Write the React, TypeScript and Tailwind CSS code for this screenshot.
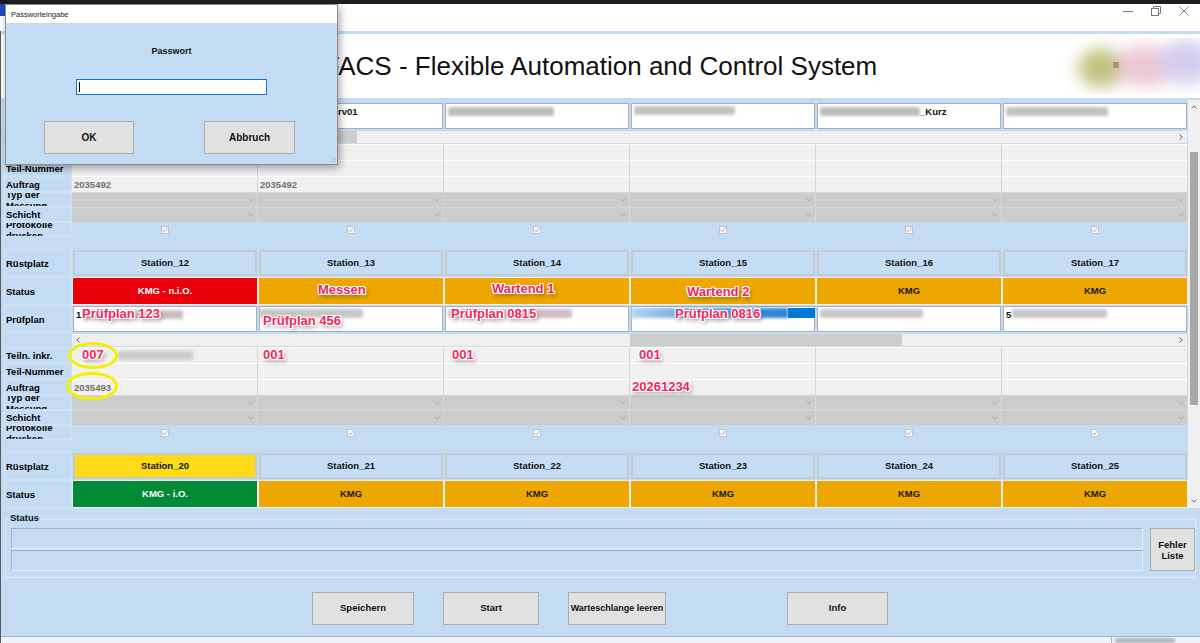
import React from "react";

const ANN =
  "absolute z-20 whitespace-nowrap text-[13px] font-bold leading-[15px] text-[#f3265e] [text-shadow:-1px_-1px_0_#fff,1px_-1px_0_#fff,-1px_1px_0_#fff,1px_1px_0_#fff,0_1px_0_#fff,1px_0_0_#fff,2px_3px_4px_rgba(0,0,0,0.45)]";

function Ann({ t, cls }: { t: string; cls: string }) {
  return <span className={`${ANN} ${cls}`}>{t}</span>;
}

function Bl({ cls }: { cls: string }) {
  return <span className={`block h-[9px] shrink-0 rounded-[2px] blur-[1.5px] ${cls}`} />;
}

function Ring({ cls }: { cls: string }) {
  return (
    <span
      className={`pointer-events-none absolute z-10 rounded-[50%] border-[3px] border-[#f4ef00] ${cls}`}
    />
  );
}

function Chevron() {
  return (
    <svg width="6" height="4" viewBox="0 0 6 4">
      <path d="M0.5 0.5 L3 3.2 L5.5 0.5" fill="none" stroke="#a3a3a3" strokeWidth="0.8" />
    </svg>
  );
}

function Check() {
  return (
    <svg width="8" height="8" viewBox="0 0 8 8">
      <rect x="0.5" y="0.5" width="7" height="7" fill="#f6f6f6" stroke="#c4c4c4" />
      <path d="M1.8 4.2 L3.3 5.8 L6.4 1.8" fill="none" stroke="#a6a6a6" strokeWidth="0.9" />
    </svg>
  );
}

function LabelCell({ text }: { text?: string }) {
  if (text === undefined) return <div className="w-[68px] shrink-0" />;
  return (
    <div className="flex w-[68px] shrink-0 items-center overflow-hidden border border-[#d2e1ef] bg-[#c3dcf3] px-[1px] text-[9.5px] font-bold leading-[11px] text-black">
      <span>{text}</span>
    </div>
  );
}

type BlockData = {
  stations: string[];
  stationBg: string[];
  status: React.ReactNode[];
  statusBg: string[];
  pruef: React.ReactNode[];
  thumb: string;
  teiln: React.ReactNode[];
  auftrag: React.ReactNode[];
};

const COLS = [0, 1, 2, 3, 4, 5];

function DataRow({ label, cells }: { label: string; cells: React.ReactNode[] }) {
  return (
    <div className="flex h-[16px]">
      <LabelCell text={label} />
      {COLS.map((i) => (
        <div
          key={i}
          className="relative flex w-[186px] shrink-0 items-center border-t border-r border-t-white border-r-[#d3d3d3] bg-[#f0f0f0] px-[2px] text-[9.5px] font-bold leading-[11px] text-[#707070]"
        >
          {cells[i]}
        </div>
      ))}
    </div>
  );
}

function DropRow({ label }: { label: string }) {
  return (
    <div className="flex h-[15px]">
      <LabelCell text={label} />
      {COLS.map((i) => (
        <div
          key={i}
          className="flex w-[186px] shrink-0 items-center justify-end border-t border-r border-t-[#d8d8d8] border-r-[#d9d9d9] bg-[#cccccc] pr-[3px]"
        >
          <Chevron />
        </div>
      ))}
    </div>
  );
}

function HeadRows({ d }: { d: BlockData }) {
  return (
    <>
      <div className="flex h-[28px]">
        <LabelCell text="Rüstplatz" />
        {COLS.map((i) => (
          <div key={i} className="w-[186px] shrink-0 p-[1px]">
            <div
              className={`flex h-full items-center justify-center border-2 border-[#c6cbd0] text-[9.5px] font-bold text-[#111] ${d.stationBg[i]}`}
            >
              {d.stations[i]}
            </div>
          </div>
        ))}
      </div>
      <div className="flex h-[28px]">
        <LabelCell text="Status" />
        {COLS.map((i) => (
          <div
            key={i}
            className={`relative flex w-[186px] shrink-0 items-center justify-center border border-[#eeeeee] text-[9.5px] font-bold ${d.statusBg[i]}`}
          >
            {d.status[i]}
          </div>
        ))}
      </div>
    </>
  );
}

function BodyRows({ d }: { d: BlockData }) {
  return (
    <>
      <div className="flex h-[28px]">
        <LabelCell text="Prüfplan" />
        {COLS.map((i) => (
          <div key={i} className="w-[186px] shrink-0 p-[1px]">
            <div className="relative flex h-full items-start border border-[#a7b0b9] bg-white px-[2px] pt-[2px] text-[9.5px] font-bold leading-[11px] text-[#111]">
              {d.pruef[i]}
            </div>
          </div>
        ))}
      </div>
      <div className="flex h-[14px]">
        <div className="w-[68px] shrink-0" />
        <div className="mt-[1px] flex h-[12px] w-[1115px] items-center bg-[#efefef]">
          <span className="flex w-[12px] justify-center">
            <svg width="4" height="6" viewBox="0 0 4 6">
              <path d="M3.5 0.5 L0.8 3 L3.5 5.5" fill="none" stroke="#555" strokeWidth="0.9" />
            </svg>
          </span>
          <div className="flex h-full flex-1 items-center">
            <div className={`h-[12px] bg-[#cdcdcd] ${d.thumb}`} />
          </div>
          <span className="flex w-[12px] justify-center">
            <svg width="4" height="6" viewBox="0 0 4 6">
              <path d="M0.5 0.5 L3.2 3 L0.5 5.5" fill="none" stroke="#555" strokeWidth="0.9" />
            </svg>
          </span>
        </div>
      </div>
      <DataRow label="Teiln. inkr." cells={d.teiln} />
      <DataRow label="Teil-Nummer" cells={[]} />
      <DataRow label="Auftrag" cells={d.auftrag} />
      <DropRow label="Typ der Messung" />
      <DropRow label="Schicht" />
      <div className="flex h-[15px]">
        <LabelCell text="Protokolle drucken" />
        {COLS.map((i) => (
          <div key={i} className="flex w-[186px] shrink-0 justify-center pt-[4px]">
            <Check />
          </div>
        ))}
      </div>
      <div className="h-[12px]" />
    </>
  );
}

const BLUE_CELL = "bg-[#c4ddf4]";
const ORANGE = "bg-[#eea600] text-[#1a1a1a]";

const A: BlockData = {
  stations: [],
  stationBg: [],
  status: [],
  statusBg: [],
  pruef: [
    <Bl key="a" cls="mt-[2px] w-[100px] bg-[#b8b8b8]" />,
    <React.Fragment key="b">
      <Bl cls="mt-[2px] w-[74px] bg-[#b8b8b8]" />
      <span className="ml-[2px]">rv01</span>
    </React.Fragment>,
    <Bl key="c" cls="mt-[1px] w-[106px] bg-[#bdbdbd]" />,
    <Bl key="d" cls="mt-[0px] w-[101px] bg-[#c2c2c2]" />,
    <React.Fragment key="e">
      <Bl cls="mt-[1px] w-[100px] bg-[#bdbdbd]" />
      <span>_Kurz</span>
    </React.Fragment>,
    <Bl key="f" cls="mt-[1px] w-[102px] bg-[#c2c2c2]" />,
  ],
  thumb: "ml-[180px] w-[93px]",
  teiln: [],
  auftrag: ["2035492", "2035492"],
};

const B: BlockData = {
  stations: ["Station_12", "Station_13", "Station_14", "Station_15", "Station_16", "Station_17"],
  stationBg: [BLUE_CELL, BLUE_CELL, BLUE_CELL, BLUE_CELL, BLUE_CELL, BLUE_CELL],
  status: [
    <span key="a" className="text-white">KMG - n.i.O.</span>,
    <Ann key="b" t="Messen" cls="left-[59px] top-[4px]" />,
    <Ann key="c" t="Wartend 1" cls="left-[47px] top-[3px]" />,
    <Ann key="d" t="Wartend 2" cls="left-[56px] top-[6px]" />,
    "KMG",
    "KMG",
  ],
  statusBg: ["bg-[#e8000b]", ORANGE, ORANGE, ORANGE, ORANGE, ORANGE],
  pruef: [
    <React.Fragment key="a">
      <span>1</span>
      <Bl cls="ml-[2px] mt-[1px] w-[100px] bg-[#c9bfc3]" />
      <Ann t="Prüfplan 123" cls="left-[8px] top-[-1px]" />
    </React.Fragment>,
    <React.Fragment key="b">
      <Bl cls="-ml-[3px] mt-[0px] w-[104px] bg-[#c6c6c6]" />
      <Ann t="Prüfplan 456" cls="left-[3px] top-[6px]" />
    </React.Fragment>,
    <React.Fragment key="c">
      <Bl cls="mt-[0px] w-[124px] bg-[#d4bcc4]" />
      <Ann t="Prüfplan 0815" cls="left-[5px] top-[-1px]" />
    </React.Fragment>,
    <React.Fragment key="d">
      <span className="-ml-[3px] -mt-[1px] block h-[10px] w-[157px] shrink-0 bg-linear-to-r from-[#b6d3ef] via-[#4f98dd] to-[#2a84d8] blur-[1.5px]" />
      <span className="-mt-[1px] block h-[10px] w-[27px] shrink-0 bg-[#0078d7]" />
      <Ann t="Prüfplan 0816" cls="left-[43px] top-[-1px]" />
    </React.Fragment>,
    <Bl key="e" cls="mt-[0px] w-[103px] bg-[#c8c8c8]" />,
    <React.Fragment key="f">
      <span>5</span>
      <Bl cls="ml-[1px] mt-[0px] w-[95px] bg-[#c8c8c8]" />
    </React.Fragment>,
  ],
  thumb: "ml-[546px] w-[272px]",
  teiln: [
    <React.Fragment key="a">
      <Bl cls="ml-[44px] w-[75px] bg-[#cbcbcb]" />
      <Ann t="007" cls="left-[10px] top-[-1px]" />
      <Ring cls="left-[-4px] top-[-6px] h-[27px] w-[50px]" />
    </React.Fragment>,
    <Ann key="b" t="001" cls="left-[5px] top-[-1px]" />,
    <Ann key="c" t="001" cls="left-[8px] top-[-1px]" />,
    <Ann key="d" t="001" cls="left-[9px] top-[-1px]" />,
  ],
  auftrag: [
    <React.Fragment key="a">
      <span>2035493</span>
      <Ring cls="left-[-6px] top-[-8px] h-[28px] w-[52px]" />
    </React.Fragment>,
    null,
    null,
    <Ann key="d" t="20261234" cls="left-[2px] top-[-1px]" />,
  ],
};

const C: BlockData = {
  stations: ["Station_20", "Station_21", "Station_22", "Station_23", "Station_24", "Station_25"],
  stationBg: ["bg-[#ffdc17]", BLUE_CELL, BLUE_CELL, BLUE_CELL, BLUE_CELL, BLUE_CELL],
  status: [<span key="a" className="text-white">KMG - i.O.</span>, "KMG", "KMG", "KMG", "KMG", "KMG"],
  statusBg: ["bg-[#008a36]", ORANGE, ORANGE, ORANGE, ORANGE, ORANGE],
  pruef: [],
  thumb: "",
  teiln: [],
  auftrag: [],
};

function Btn({ cls, children }: { cls: string; children: React.ReactNode }) {
  return (
    <div
      className={`flex h-full shrink-0 items-center justify-center whitespace-nowrap border border-[#adadad] bg-[#e1e1e1] font-bold text-[#111] ${cls}`}
    >
      {children}
    </div>
  );
}

export default function App() {
  return (
    <div className="relative h-[643px] w-[1200px] overflow-hidden bg-[#c3dcf3] font-['Liberation_Sans',Arial,sans-serif] text-black">
      <div className="h-[4px] bg-[#1e1e1e]" />
      {/* window title bar */}
      <div className="flex h-[27px] items-start bg-white">
        <div className="h-[12px] w-[6px] bg-[#2448c0]" />
        <div className="flex-1" />
        <div className="flex pr-[2px]">
          <div className="flex h-[14px] w-[28px] items-center justify-center">
            <svg width="10" height="10" viewBox="0 0 10 10">
              <path d="M0 5.5 H10" stroke="#777" strokeWidth="1" />
            </svg>
          </div>
          <div className="flex h-[14px] w-[28px] items-center justify-center">
            <svg width="10" height="10" viewBox="0 0 10 10">
              <rect x="0.5" y="2.5" width="7" height="7" fill="none" stroke="#777" />
              <path d="M2.5 2.5 V0.5 H9.5 V7.5 H7.5" fill="none" stroke="#777" />
            </svg>
          </div>
          <div className="flex h-[14px] w-[28px] items-center justify-center">
            <svg width="10" height="10" viewBox="0 0 10 10">
              <path d="M0.5 0.5 L9.5 9.5 M9.5 0.5 L0.5 9.5" stroke="#777" strokeWidth="0.9" />
            </svg>
          </div>
        </div>
      </div>

      <div className="border-l border-[#5a5a5a]">
        {/* header */}
        <div className="pt-[3px]">
          <div className="grid h-[64px] grid-cols-[1fr_auto_1fr] items-center bg-white">
            <div />
            <div className="whitespace-nowrap text-[26px] leading-[30px] text-[#111]">
              FACS - Flexible Automation and Control System
            </div>
            <div className="justify-self-end">
              <svg width="140" height="56" viewBox="0 0 140 56">
                <defs>
                  <filter id="lg" filterUnits="userSpaceOnUse" x="-20" y="-20" width="180" height="96">
                    <feGaussianBlur stdDeviation="8" />
                  </filter>
                </defs>
                <g filter="url(#lg)">
                  <ellipse cx="42" cy="30" rx="24" ry="19" fill="#bfc27a" />
                  <ellipse cx="86" cy="28" rx="30" ry="21" fill="#ecc8d6" />
                  <ellipse cx="126" cy="24" rx="28" ry="22" fill="#d4cdee" />
                </g>
                <rect x="53" y="24" width="6" height="6" fill="#a99a68" />
              </svg>
            </div>
          </div>
        </div>

        {/* station grid viewport */}
        <div className="mt-[2px] flex h-[408px]">
          <div className="w-[3px] shrink-0" />
          <div className="w-[1184px] shrink-0 overflow-hidden pt-[2px]">
            <BodyRows d={A} />
            <HeadRows d={B} />
            <BodyRows d={B} />
            <HeadRows d={C} />
          </div>
          <div className="flex w-[12px] shrink-0 flex-col bg-[#f0f0f0]">
            <div className="flex h-[14px] items-center justify-center">
              <svg width="6" height="4" viewBox="0 0 6 4">
                <path d="M0.5 3.5 L3 0.8 L5.5 3.5" fill="none" stroke="#606060" strokeWidth="0.9" />
              </svg>
            </div>
            <div className="flex-1">
              <div className="mx-[2px] mt-[38px] h-[253px] bg-[#a8a8a8]" />
            </div>
            <div className="flex h-[14px] items-center justify-center">
              <svg width="6" height="4" viewBox="0 0 6 4">
                <path d="M0.5 0.5 L3 3.2 L5.5 0.5" fill="none" stroke="#606060" strokeWidth="0.9" />
              </svg>
            </div>
          </div>
        </div>

        {/* status group */}
        <div className="h-[84px] px-[4px] pt-[4px]">
          <div className="relative z-10 ml-[4px] w-fit bg-[#c3dcf3] px-[1px] text-[9.5px] font-bold leading-[11px] text-[#111]">
            Status
          </div>
          <div className="-mt-[4px] flex h-[59px] gap-[7px] border border-[#dde9f4] pl-[5px] pt-[8px]">
            <div className="flex w-[1132px] shrink-0 flex-col gap-[1px]">
              <div className="h-[21px] border border-[#a3b1bf] border-b-[#eaf2fa] border-r-[#eaf2fa] bg-[#c3dcf3]" />
              <div className="h-[21px] border border-[#a3b1bf] border-b-[#eaf2fa] border-r-[#eaf2fa] bg-[#c3dcf3]" />
            </div>
            <div className="flex h-[43px] w-[45px] shrink-0 flex-col items-center justify-center border border-[#adadad] bg-[#e1e1e1] text-[9.5px] font-bold leading-[11px] text-[#111]">
              <span>Fehler</span>
              <span>Liste</span>
            </div>
          </div>
        </div>

        {/* buttons */}
        <div className="flex h-[33px] text-[9.5px]">
          <Btn cls="ml-[311px] w-[102px]">Speichern</Btn>
          <Btn cls="ml-[29px] w-[96px]">Start</Btn>
          <Btn cls="ml-[29px] w-[98px] text-[9px]">Warteschlange leeren</Btn>
          <Btn cls="ml-[121px] w-[101px]">Info</Btn>
        </div>

        {/* bottom status strip */}
        <div className="mt-[11px] flex h-[7px] border-t border-[#a8b4c0] bg-[#eef3f8]">
          <div className="flex-1" />
          <div className="flex w-[89px] items-start border-l border-[#a8b4c0] pl-[3px] pt-[1px]">
            <span className="block h-[5px] w-[60px] rounded-[2px] bg-[#b0b8c0] blur-[1px]" />
          </div>
        </div>
      </div>

      {/* password dialog overlay */}
      <div className="absolute left-[5px] top-[4px] z-30 h-[161px] w-[333px] border border-[#8c8c8c] bg-[#c3dcf3] shadow-[2px_3px_8px_rgba(0,0,0,0.35)]">
        <div className="flex h-[18px] items-center bg-white pl-[5px] text-[7.5px] leading-[9px] text-[#222]">
          Passworteingabe
        </div>
        <div className="flex flex-col items-center pt-[23px]">
          <div className="text-[9px] font-bold leading-[10px] text-[#111]">Passwort</div>
          <div className="mt-[23px] flex h-[16px] w-[191px] items-center border border-[#0a78d4] bg-white pl-[2px]">
            <span className="block h-[10px] w-px bg-black" />
          </div>
          <div className="mt-[26px] flex w-full gap-[70px] pl-[38px]">
            <div className="flex h-[33px] w-[90px] items-center justify-center border border-[#adadad] bg-[#e1e1e1] text-[10px] font-bold text-[#111]">
              OK
            </div>
            <div className="flex h-[33px] w-[91px] items-center justify-center border border-[#adadad] bg-[#e1e1e1] text-[10px] font-bold text-[#111]">
              Abbruch
            </div>
          </div>
        </div>
        <svg className="absolute bottom-[1px] right-[1px]" width="6" height="6" viewBox="0 0 6 6">
          <rect x="4" y="0" width="1" height="1" fill="#9aa8b4" />
          <rect x="2" y="2" width="1" height="1" fill="#9aa8b4" />
          <rect x="4" y="2" width="1" height="1" fill="#9aa8b4" />
          <rect x="0" y="4" width="1" height="1" fill="#9aa8b4" />
          <rect x="2" y="4" width="1" height="1" fill="#9aa8b4" />
          <rect x="4" y="4" width="1" height="1" fill="#9aa8b4" />
        </svg>
      </div>
    </div>
  );
}
